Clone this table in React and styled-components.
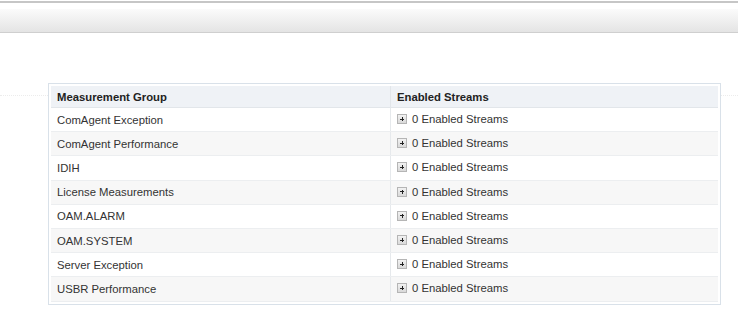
import React from "react";
import styled, { createGlobalStyle } from "styled-components";

const Global = createGlobalStyle`
  html, body { margin: 0; padding: 0; background: #fff; }
  body { font-family: "Liberation Sans", Arial, sans-serif; }
`;

const Page = styled.div`
  width: 738px;
  height: 318px;
  overflow: hidden;
  background: #fff;
`;

const TopRule = styled.div`
  margin-top: 1px;
  height: 2px;
  background: #c6c6c6;
`;

const Toolbar = styled.div`
  margin-top: 6px;
  height: 23px;
  background: linear-gradient(#fbfbfb, #e4e4e4);
  border-bottom: 1px solid #cfcfcf;
`;

const Content = styled.div`
  position: relative;
  padding: 50px 17px 0 48px;
`;

const Guide = styled.div`
  position: absolute;
  left: 0;
  right: 0;
  top: 62px;
  border-top: 1px dotted #ececec;
`;

const Frame = styled.div`
  position: relative;
  border: 1px solid #d9e1e9;
  padding: 2px;
  background: #fff;
`;

const Table = styled.table`
  width: 100%;
  border-collapse: collapse;
  font-size: 11.3px;
  color: #333;
`;

const Th = styled.th`
  text-align: left;
  font-weight: bold;
  color: #222;
  background: #eff2f6;
  height: 21px;
  padding: 0 6px;
  border-bottom: 1px solid #e2e6ea;
  border-left: ${(p) => (p.$divided ? "1px solid #e2e6ea" : "none")};
  width: ${(p) => p.$w || "auto"};
`;

const Tr = styled.tr`
  background: ${(p) => (p.$alt ? "#f7f7f7" : "#fff")};
`;

const Td = styled.td`
  height: 23.2px;
  padding: 0 6px;
  border-bottom: 1px solid #eceef0;
  border-left: ${(p) => (p.$divided ? "1px solid #e6e9ec" : "none")};
  white-space: nowrap;
`;

const Streams = styled.span`
  display: inline-flex;
  align-items: center;
  gap: 5px;
`;

const Expand = styled.span`
  width: 10px;
  height: 10px;
  box-sizing: border-box;
  border: 1px solid #b5b5b5;
  background: linear-gradient(#f2f2f2, #d9d9d9);
  display: inline-block;
  position: relative;
  &::before,
  &::after {
    content: "";
    position: absolute;
    background: #222;
  }
  &::before { left: 2px; right: 2px; top: 3.5px; height: 1px; }
  &::after { top: 2px; bottom: 2px; left: 3.5px; width: 1px; }
`;

const groups = [
  "ComAgent Exception",
  "ComAgent Performance",
  "IDIH",
  "License Measurements",
  "OAM.ALARM",
  "OAM.SYSTEM",
  "Server Exception",
  "USBR Performance",
];

export default function App() {
  return (
    <Page>
      <Global />
      <TopRule />
      <Toolbar />
      <Content>
        <Guide />
        <Frame>
          <Table>
            <thead>
              <tr>
                <Th $w="327px">Measurement Group</Th>
                <Th $divided>Enabled Streams</Th>
              </tr>
            </thead>
            <tbody>
              {groups.map((g, i) => (
                <Tr key={g} $alt={i % 2 === 1}>
                  <Td>{g}</Td>
                  <Td $divided>
                    <Streams>
                      <Expand />
                      0 Enabled Streams
                    </Streams>
                  </Td>
                </Tr>
              ))}
            </tbody>
          </Table>
        </Frame>
      </Content>
    </Page>
  );
}
